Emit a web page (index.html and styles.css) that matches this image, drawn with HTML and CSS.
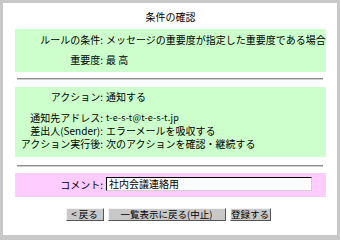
FILE: index.html
```html
<!DOCTYPE html>
<html lang="ja">
<head>
<meta charset="utf-8">
<link rel="stylesheet" href="styles.css">
</head>
<body>
<div class="panel">
  <div class="title">条件の確認</div>
  <div class="box green box1">
    <div class="row tall"><span class="lbl">ルールの条件:</span><span class="val">メッセージの重要度が指定した重要度である場合</span></div>
    <div class="row tall"><span class="lbl">重要度:</span><span class="val">最 高</span></div>
  </div>
  <div class="rule"></div>
  <div class="box green box2">
    <div class="row tall"><span class="lbl">アクション:</span><span class="val">通知する</span></div>
    <div class="group">
      <div class="row"><span class="lbl">通知先アドレス:</span><span class="val mail">t-e-s-t@t-e-s-t.jp</span></div>
      <div class="row"><span class="lbl">差出人(Sender):</span><span class="val">エラーメールを吸収する</span></div>
      <div class="row"><span class="lbl">アクション実行後:</span><span class="val">次のアクションを確認・継続する</span></div>
    </div>
  </div>
  <div class="rule rule2"></div>
  <div class="box pink">
    <div class="row"><span class="lbl">コメント:</span><span class="val"><span class="input">社内会議連絡用</span></span></div>
  </div>
  <div class="buttons">
    <span class="btn b1">&lt; 戻る</span>
    <span class="btn b2">一覧表示に戻る(中止)</span>
    <span class="btn b3">登録する</span>
  </div>
</div>
</body>
</html>
```
FILE: styles.css
```css
html, body {
  margin: 0;
  padding: 0;
}
body {
  background: #c8c8c8;
  padding: 3px;
  width: 334px;
  height: 232px;
  font-family: "Noto Sans CJK JP", "Noto Sans", sans-serif;
  font-size: 10px;
  color: #000;
}
.panel {
  background: #fff;
  height: 232px;
  padding: 8px 11px 0 12px;
  box-sizing: border-box;
  display: flex;
  flex-direction: column;
}
.title {
  text-align: center;
  line-height: 12px;
  height: 12px;
}
.box {
  display: flex;
  flex-direction: column;
}
.green { background: #ccffcc; }
.pink { background: #ffccff; margin-top: 6px; padding: 4px 0 6px; }
.box1 { margin-top: 6px; padding: 1px 0 2px; }
.box2 { margin-top: 7px; padding: 0 0 7px; }
.group { margin-top: 4px; }
.row {
  display: flex;
  align-items: center;
  line-height: 13px;
  height: 13px;
  white-space: nowrap;
}
.group .row { font-size: 9.5px; }
.group .row .lbl { font-size: 10px; }
.group .row .val { font-size: 10px; }
.group .row .mail { font-size: 9px; }
.row.tall { height: 20px; line-height: 20px; }
.pink .row { height: 14px; }
.lbl {
  width: 88px;
  text-align: right;
  flex: none;
}
.val {
  padding-left: 3px;
}
.mail { letter-spacing: 0.2px; }
.rule {
  margin: 6px 3px 0 2px;
  height: 0;
  border-top: 1px solid #8c8c8c;
  border-bottom: 1px solid #cfcfcf;
}
.rule2 { margin-top: 8px; }
.input {
  display: block;
  width: 206px;
  height: 14px;
  box-sizing: border-box;
  background: #fff;
  border-top: 1px solid #000;
  border-left: 1px solid #000;
  border-right: 1px solid #d0d0d0;
  border-bottom: 1px solid #d0d0d0;
  line-height: 12px;
  padding-left: 2px;
}
.buttons {
  display: flex;
  justify-content: center;
  gap: 4px;
  margin-top: 11px;
  padding-right: 5px;
}
.btn {
  height: 13px;
  box-sizing: border-box;
  background: #c8c8c8;
  border-top: 1px solid #f4f4f4;
  border-left: 1px solid #f4f4f4;
  border-right: 1px solid #555;
  border-bottom: 1px solid #555;
  line-height: 11px;
  text-align: center;
  font-size: 9.5px;
}
.b1 { width: 38px; }
.b2 { width: 118px; }
.b3 { width: 41px; }
```
